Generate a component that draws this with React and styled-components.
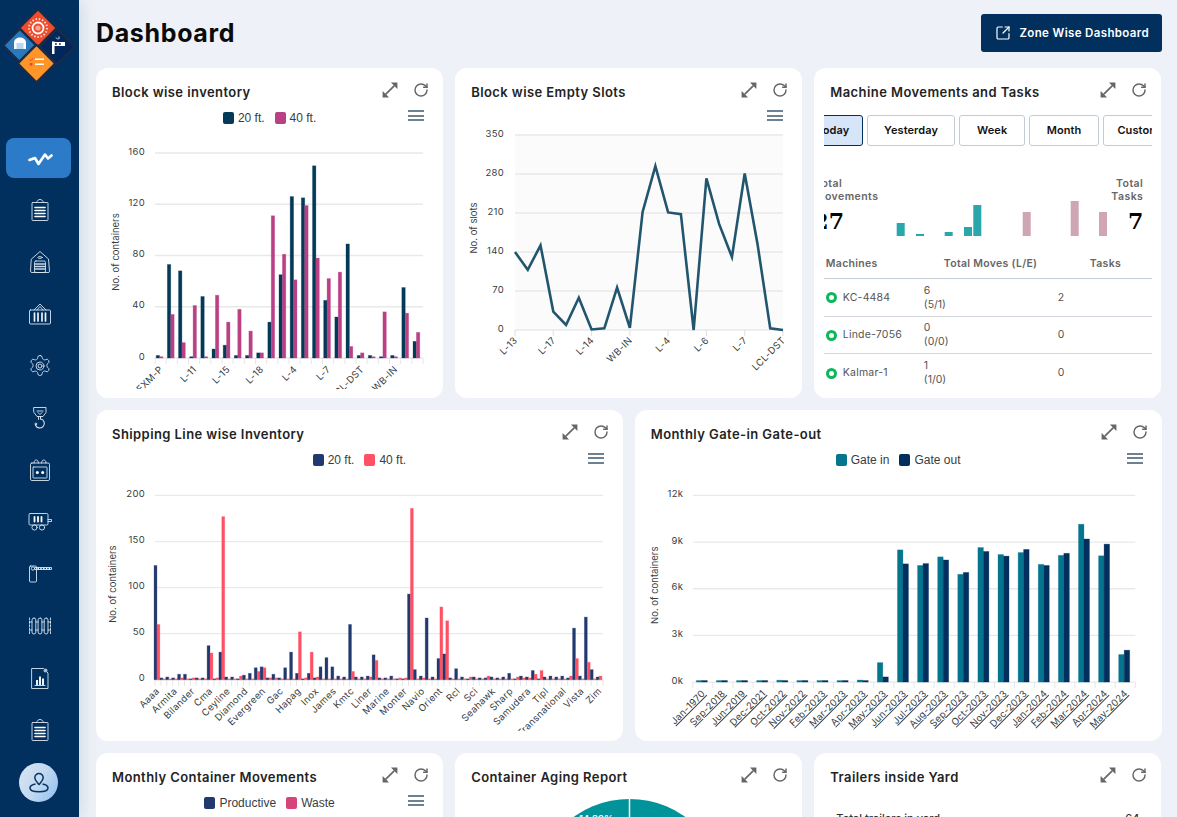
import React from "react";
import styled, { createGlobalStyle } from "styled-components";
import { RotateCw, SquareArrowOutUpRight } from "lucide-react";

const Global = createGlobalStyle`
  html, body { margin: 0; padding: 0; height: 100%; overflow: hidden; background: #eef2f8; }
  body { font-family: Inter, "Noto Sans", sans-serif; }
  * { box-sizing: border-box; }
`;

const Page = styled.div`
  display: flex;
  width: 1177px;
  height: 817px;
  overflow: hidden;
  background: #eef2f8;
`;
const Sidebar = styled.aside`
  flex: 0 0 79px;
  height: 817px;
  background: #012f5e;
  display: flex;
  flex-direction: column;
  align-items: flex-start;
  box-shadow: 2px 0 16px rgba(1, 47, 94, 0.14);
  z-index: 1;
`;
const LogoWrap = styled.div`
  height: 138px;
  width: 100%;
  flex: none;
`;
const NavList = styled.nav`
  display: flex;
  flex-direction: column;
  gap: 12px;
  padding-left: 6px;
`;
const NavItem = styled.div`
  width: 65px;
  height: 40px;
  padding-left: 3px;
  display: flex;
  align-items: center;
  justify-content: center;
  border-radius: 8px;
  background: ${(p) => (p.$active ? "#2c7bc8" : "transparent")};
  color: #d9e4f0;
`;
const Avatar = styled.div`
  width: 39px;
  height: 39px;
  margin: 13px 0 0 19px;
  border-radius: 50%;
  background: linear-gradient(120deg, #d8e5f1 0%, #c2d9f0 50%, #8fbdf0 100%);
  display: flex;
  align-items: center;
  justify-content: center;
  color: #07335f;
`;
const Main = styled.main`
  flex: 1;
  min-width: 0;
  padding: 0 15.5px 0 17px;
`;
const TopBar = styled.header`
  height: 67.75px;
  display: flex;
  align-items: flex-start;
  justify-content: space-between;
`;
const PageTitle = styled.h1`
  margin: 16px 0 0;
  font-size: 25px;
  line-height: 34px;
  font-weight: 700;
  color: #0b0b0b;
  letter-spacing: 0.65px;
`;
const ZoneButton = styled.button`
  margin-top: 14px;
  width: 181px;
  height: 38px;
  border: 0;
  border-radius: 3px;
  background: #012f5e;
  color: #fff;
  display: flex;
  align-items: center;
  gap: 9px;
  padding: 0 0 0 14px;
  font: 600 11.5px Inter, sans-serif;
  letter-spacing: 0.36px;
  white-space: nowrap;
`;
const Rows = styled.div`
  display: flex;
  flex-direction: column;
  gap: 12px;
`;
const Row = styled.div`
  display: grid;
  grid-template-columns: repeat(${(p) => p.$cols}, 1fr);
  gap: 12px;
`;
const Card = styled.section`
  height: 330.5px;
  background: #fff;
  border-radius: 12px;
  display: flex;
  flex-direction: column;
  overflow: hidden;
`;
const CardHead = styled.div`
  flex: none;
  height: 48px;
  margin-bottom: -8px;
  padding: 0 14px 0 16px;
  display: flex;
  align-items: center;
  justify-content: space-between;
`;
const CardTitle = styled.h2`
  margin: 0;
  font-size: 13px;
  font-weight: 600;
  color: #232323;
  letter-spacing: 0.42px;
  white-space: nowrap;
`;
const HeadTools = styled.div`
  display: flex;
  align-items: center;
  gap: 15px;
  color: #666;
  margin-top: -4px;
`;
const LegendRow = styled.div`
  flex: none;
  height: 20px;
  padding: 0 19px;
  display: grid;
  grid-template-columns: 1fr auto 1fr;
  align-items: center;
`;
const Legend = styled.div`
  grid-column: 2;
  display: flex;
  gap: 10px;
`;
const LegendItem = styled.span`
  display: inline-flex;
  align-items: center;
  gap: 4px;
  font: 12px "Liberation Sans", Arial, sans-serif;
  color: #373d3f;
`;
const Swatch = styled.i`
  width: 11px;
  height: 12px;
  border-radius: 2px;
  background: ${(p) => p.$c};
`;
const MenuIcon = styled.span`
  grid-column: 3;
  justify-self: end;
  width: 16px;
  margin-top: -4px;
  display: flex;
  flex-direction: column;
  gap: 2.5px;
  & > i {
    display: block;
    height: 2px;
    background: #6e8192;
  }
`;
const ChartSvg = styled.svg`
  display: block;
  flex: none;
  & text {
    font-family: Inter, "Noto Sans", sans-serif;
    font-size: 9.5px;
    letter-spacing: 0.3px;
    fill: #373d3f;
  }
  & text.axis-title {
    letter-spacing: 0;
  }
`;
const TabStrip = styled.div`
  flex: none;
  margin: 7px 9.5px 0 9.5px;
  display: flex;
  gap: 4.5px;
  overflow: hidden;
`;
const Tab = styled.button`
  flex: none;
  width: ${(p) => p.$w}px;
  height: 31px;
  margin-left: ${(p) => p.$ml || 0}px;
  background: ${(p) => (p.$active ? "#d6e6f8" : "#fff")};
  border: 1px solid ${(p) => (p.$active ? "#012f5e" : "#c3ccd6")};
  border-radius: 3px;
  font: 600 11px Inter, sans-serif;
  color: #111;
  letter-spacing: 0.1px;
  padding: 0;
`;
const Stats = styled.div`
  flex: none;
  height: 68px;
  margin: 29px 9.5px 0 9.5px;
  padding-right: 11px;
  display: flex;
  overflow: hidden;
`;
const StatBlock = styled.div`
  flex: none;
  width: ${(p) => (p.$w ? `${p.$w}px` : "auto")};
  display: flex;
  flex-direction: column;
  align-items: ${(p) => (p.$right ? "flex-end" : "flex-start")};
  margin-left: ${(p) => (p.$right ? "auto" : `${p.$ml || 0}px`)};
  text-align: ${(p) => (p.$right ? "right" : "left")};
`;
const StatLabel = styled.div`
  font-size: 10.5px;
  line-height: 13px;
  font-weight: 600;
  color: #666;
  padding-top: 2px;
  letter-spacing: 0.45px;
  white-space: nowrap;
`;
const StatValue = styled.div`
  font: 700 22px/28px "DejaVu Serif", serif;
  color: #050505;
  margin-top: 4px;
  margin-left: ${(p) => p.$ml || 0}px;
`;
const TableHead = styled.div`
  flex: none;
  margin: 13px 9.5px 0 9.5px;
  height: 23.5px;
  padding: 0 0 6px 2px;
  display: grid;
  grid-template-columns: 118px 146px 1fr;
  border-bottom: 1px solid #c6cdd6;
  font-size: 10.5px;
  font-weight: 600;
  line-height: 16px;
  color: #666;
  letter-spacing: 0.3px;
`;
const TableRow = styled.div`
  flex: none;
  margin: 0 9.5px 0 9.5px;
  height: 37.5px;
  padding-left: 2px;
  display: grid;
  grid-template-columns: 98px 134px 1fr;
  align-items: center;
  border-bottom: ${(p) => (p.$last ? "0" : "1px solid #d3d8de")};
  font-size: 10.5px;
  line-height: 14px;
  color: #555;
`;
const MachineName = styled.div`
  display: flex;
  align-items: center;
  gap: 6px;
  letter-spacing: 0.2px;
`;
const Dot = styled.i`
  width: 11px;
  height: 11px;
  border-radius: 50%;
  border: 3.5px solid #0cb85c;
  background: #fff;
`;
const PieWrap = styled.div`
  flex: none;
`;
const TrailerList = styled.div`
  padding: 18px 22px 0;
  display: flex;
  justify-content: space-between;
  font-size: 11px;
  font-weight: 500;
  color: #333;
`;

/* ---------- header icons ---------- */
const ExpandIcon = () => (
  <svg width="16" height="16" viewBox="0 0 16 16" fill="#666" stroke="none">
    <path d="M3.2 11.6 11.6 3.2 12.8 4.4 4.4 12.8Z" />
    <path d="M9 0.6H15.4V7L13.1 4.7 11.3 2.9Z" />
    <path d="M0.6 9V15.4H7L4.7 13.1 2.9 11.3Z" />
  </svg>
);
const Tools = () => (
  <HeadTools>
    <ExpandIcon />
    <RotateCw size={16} strokeWidth={2.2} />
  </HeadTools>
);
const Menu = () => (
  <MenuIcon>
    <i />
    <i />
    <i />
  </MenuIcon>
);

/* ---------- logo ---------- */
const Diamond = ({ cx, cy, r, fill }) => (
  <rect
    x={cx - r * 0.707}
    y={cy - r * 0.707}
    width={r * 1.414}
    height={r * 1.414}
    rx="2"
    fill={fill}
    stroke="#162c4d"
    strokeWidth="2.5"
    transform={`rotate(45 ${cx} ${cy})`}
  />
);
const Logo = () => (
  <svg width="79" height="88" viewBox="0 0 79 88">
    <Diamond cx={57} cy={46.5} r={18} fill="#03275a" />
    <Diamond cx={20} cy={45.5} r={17} fill="#2b79bd" />
    <Diamond cx={38} cy={28} r={19} fill="#ef4c2b" />
    <Diamond cx={36.5} cy={63.5} r={19} fill="#ff9429" />
    <circle cx="38" cy="28" r="5.5" fill="none" stroke="#fff" strokeWidth="1.8" />
    <circle cx="38" cy="28" r="2.6" fill="#f7a59a" />
    <circle cx="38" cy="28" r="9" fill="none" stroke="#ffd9d0" strokeWidth="2" strokeDasharray="1.5 1.8" />
    <path d="M14 49V42.5C14 39.5 17 37.5 20 37.5S26 39.5 26 42.5V49Z" fill="#fff" />
    <path d="M16.5 49V43H23.5V49Z" fill="#bcd6ec" />
    <path d="M52 54V41.5H54.5V54Z M52 42H65V46H52Z" fill="#fff" />
    <path d="M55 43.2H56.8V44.8H55ZM59 43.2H60.8V44.8H59Z" fill="#03275a" />
    <path d="M56 37.5L58 39.5M59 36.5V39" stroke="#dfe6f0" strokeWidth="1" fill="none" />
    <path d="M35 59.2H44M35 64.2H44" stroke="#fff" strokeWidth="1.6" />
    <path d="M29.5 59.3L31 60.6L33 58" stroke="#e34a2a" strokeWidth="1" fill="none" />
    <rect x="29.8" y="63" width="2.6" height="2.6" fill="#e34a2a" />
  </svg>
);

/* ---------- sidebar icons ---------- */
const Ico = ({ children }) => (
  <svg width="24" height="24" viewBox="0 0 24 24" fill="none" stroke="currentColor" strokeWidth="0.9" strokeLinejoin="round" strokeLinecap="round">
    {children}
  </svg>
);
const ClipboardIco = () => (
  <Ico>
    <rect x="4" y="4.5" width="16" height="18" rx="0.6" />
    <path d="M8.5 4.5C9 2.5 10.5 1.5 12 1.5S15 2.5 15.5 4.5" />
    <path d="M7 9.5H17M7 12.5H17M7 15.5H17M7 18.5H17" strokeWidth="1.6" stroke="#fff" />
  </Ico>
);
const icons = [
  <ClipboardIco key="a" />,
  <Ico key="b">
    <path d="M3.5 9 12 1.5 20.5 9 21.5 21.5Q21.5 22.5 20 22.5H4Q2.5 22.5 2.5 21.5Z" />
    <ellipse cx="12" cy="7.5" rx="2.2" ry="0.9" />
    <rect x="6.5" y="11" width="11" height="11.5" rx="1.5" />
    <path d="M7.5 14H16.5M7.5 16.5H16.5M7.5 19H16.5" strokeWidth="1.5" stroke="#c9d6e4" />
  </Ico>,
  <Ico key="c">
    <rect x="1.5" y="8" width="21" height="14" rx="1" />
    <path d="M6.5 11V19M10 11V19M14 11V19M17.5 11V19" strokeWidth="1.7" stroke="#eef3f8" />
    <path d="M6 8 12 2 18 8M9 8 12 4.5 15 8" />
  </Ico>,
  <Ico key="d">
    <path d="M12.2 1.5h-.44a2 2 0 0 0-2 2v.18a2 2 0 0 1-1 1.73l-.43.25a2 2 0 0 1-2 0l-.15-.08a2 2 0 0 0-2.73.73l-.22.38a2 2 0 0 0 .73 2.73l.15.1a2 2 0 0 1 1 1.72v.51a2 2 0 0 1-1 1.74l-.15.09a2 2 0 0 0-.73 2.73l.22.38a2 2 0 0 0 2.73.73l.15-.08a2 2 0 0 1 2 0l.43.25a2 2 0 0 1 1 1.73v.18a2 2 0 0 0 2 2h.44a2 2 0 0 0 2-2v-.18a2 2 0 0 1 1-1.73l.43-.25a2 2 0 0 1 2 0l.15.08a2 2 0 0 0 2.73-.73l.22-.39a2 2 0 0 0-.73-2.73l-.15-.08a2 2 0 0 1-1-1.74v-.5a2 2 0 0 1 1-1.74l.15-.09a2 2 0 0 0 .73-2.73l-.22-.38a2 2 0 0 0-2.73-.73l-.15.08a2 2 0 0 1-2 0l-.43-.25a2 2 0 0 1-1-1.73V3.5a2 2 0 0 0-2-2z" />
    <circle cx="12" cy="12" r="4" />
    <circle cx="12" cy="12" r="2" />
  </Ico>,
  <Ico key="e">
    <path d="M6 1.5H18V6.5L15 10.5H9L6 6.5Z" />
    <path d="M9 5H15M10 6.5 12 8.5 14 6.5" />
    <path d="M12.5 10.5V13C16.5 13.5 17 18 15.5 20C13.5 23 8 22.5 7.5 18.5" strokeWidth="1.1" />
    <path d="M10.5 10.5V13.5" />
    <circle cx="7.8" cy="18" r="0.9" />
  </Ico>,
  <Ico key="f">
    <rect x="2.5" y="5" width="19" height="17.5" rx="1.4" />
    <rect x="5" y="9" width="14" height="11" rx="0.5" />
    <path d="M6 5C6 2.8 7.2 2 8.2 2S10.4 2.8 10.4 5M13.6 5C13.6 2.8 14.8 2 15.8 2S18 2.8 18 5" />
    <circle cx="9.3" cy="14.5" r="1.5" fill="#fff" stroke="none" />
    <circle cx="14.7" cy="14.5" r="1.5" fill="#fff" stroke="none" />
  </Ico>,
  <Ico key="g">
    <rect x="1" y="3.5" width="19" height="11.5" rx="1.2" />
    <path d="M6.5 7V11.5M10 7V11.5M13.5 7V11.5" strokeWidth="1.8" stroke="#fff" />
    <path d="M20 9.5H23.5V11.5H20" />
    <circle cx="6.5" cy="17.5" r="2.6" />
    <circle cx="14" cy="17.5" r="2.6" />
  </Ico>,
  <Ico key="h">
    <rect x="1.5" y="4" width="7" height="16" rx="1" />
    <circle cx="5" cy="6.5" r="1.7" />
    <path d="M7 5.5H23.5V7.5H7" />
    <path d="M9.5 6.5H22" strokeWidth="1.5" strokeDasharray="1.4 1.4" strokeLinecap="butt" stroke="#fff" />
  </Ico>,
  <Ico key="i">
    <rect x="4" y="4" width="3.8" height="16" rx="1.9" />
    <rect x="10.1" y="4" width="3.8" height="16" rx="1.9" />
    <rect x="16.2" y="4" width="3.8" height="16" rx="1.9" />
    <path d="M1.5 4V20M22.5 4V20" strokeDasharray="2 1.4" />
    <path d="M1.5 8H4M1.5 16H4M7.8 8H10.1M7.8 16H10.1M13.9 8H16.2M13.9 16H16.2M20 8H22.5M20 16H22.5" />
  </Ico>,
  <Ico key="j">
    <path d="M4 2.5H15.5L20 7V22.5H4Z" />
    <circle cx="17.5" cy="4.5" r="2" fill="#aab9c9" stroke="none" />
    <path d="M8 19V14H10V19ZM11 19V10.5H13V19ZM14 19V12.5H16V19Z" fill="#eef3f8" stroke="none" />
    <path d="M7 19.5H17" />
  </Ico>,
  <ClipboardIco key="k" />,
];

/* ---------- charts ---------- */
function Axes({ plot, ticks, title, titleX, tickX, titleDy = -3.5 }) {
  const { x0, x1, y0, yTop, max } = plot;
  const sy = (v) => y0 - ((y0 - yTop) * v) / max;
  const ty = (y0 + yTop) / 2 + titleDy;
  return (
    <>
      {ticks.map((t) => (
        <g key={t.v}>
          <line x1={x0} x2={x1} y1={sy(t.v)} y2={sy(t.v)} stroke="#e9e9e9" strokeWidth="1.3" />
          <text x={tickX} y={sy(t.v) + 1.6} textAnchor="end">
            {t.l}
          </text>
        </g>
      ))}
      <text className="axis-title" x={titleX} y={ty} textAnchor="middle" transform={`rotate(-90 ${titleX} ${ty})`}>
        {title}
      </text>
    </>
  );
}

function BarChart({ id, box, plot, ticks, title, titleX, tickX, data, colors, barW, labels, labelStep, clipY, underline, labelDx = 3, labelDy = 12, shift = 1 }) {
  const { x0, x1, y0, yTop, max } = plot;
  const sy = (v) => y0 - ((y0 - yTop) * v) / max;
  const slot = (x1 - x0) / data.length;
  return (
    <ChartSvg width={box.w} height={box.h} viewBox={`${box.x} ${box.y} ${box.w} ${box.h}`}>
      <defs>
        <clipPath id={id}>
          <rect x={box.x} y={box.y} width={box.w} height={(clipY || box.y + box.h) - box.y} />
        </clipPath>
      </defs>
      <Axes plot={plot} ticks={ticks} title={title} titleX={titleX} tickX={tickX} />
      {data.map((_, i) => (
        <line key={i} x1={x0 + i * slot} x2={x0 + i * slot} y1={y0} y2={y0 + 6} stroke="#e6e6e6" />
      ))}
      <line x1={x1} x2={x1} y1={y0} y2={y0 + 6} stroke="#e6e6e6" />
      {data.map((d, i) => {
        const c = x0 + (i + 0.5) * slot - shift;
        return (
          <g key={i}>
            {d.map((v, k) => (
              <rect
                key={k}
                x={c + (k - 1) * barW}
                y={sy(v)}
                width={barW}
                height={y0 - sy(v)}
                fill={colors[k]}
                stroke={colors[k]}
                strokeOpacity="0.35"
                strokeWidth="0.8"
              />
            ))}
          </g>
        );
      })}
      <g clipPath={`url(#${id})`}>
        {labels.map((l, i) => {
          const x = x0 + (i * labelStep + 0.5) * slot + labelDx;
          const y = y0 + labelDy;
          return (
            <text
              key={l}
              x={x}
              y={y}
              textAnchor="end"
              transform={`rotate(-45 ${x} ${y})`}
              style={{ textDecoration: underline ? "underline" : "none" }}
            >
              {l}
            </text>
          );
        })}
      </g>
    </ChartSvg>
  );
}

function LineChart() {
  const box = { x: 455, y: 128, w: 347.17, h: 270.5 };
  const plot = { x0: 515, x1: 783, y0: 330, yTop: 135, max: 350 };
  const vals = [140, 108, 152, 33, 9, 58, 1, 3, 76, 4, 212, 294, 211, 208, 0, 272, 190, 131, 281, 155, 3, 0];
  const step = (plot.x1 - plot.x0) / 21;
  const sy = (v) => plot.y0 - ((plot.y0 - plot.yTop) * v) / plot.max;
  const pts = vals.map((v, i) => `${plot.x0 + i * step},${sy(v)}`).join(" ");
  const labels = ["L-13", "L-17", "L-14", "WB-IN", "L-4", "L-6", "L-7", "LCL-DST"];
  return (
    <ChartSvg width={box.w} height={box.h} viewBox={`${box.x} ${box.y} ${box.w} ${box.h}`}>
      <rect x={plot.x0} y={plot.yTop} width={plot.x1 - plot.x0} height={plot.y0 - plot.yTop} fill="#fbfbfb" />
      <Axes
        plot={plot}
        titleDy={-4.5}
        ticks={[0, 70, 140, 210, 280, 350].map((v) => ({ v, l: v }))}
        title="No. of slots"
        titleX={477}
        tickX={504}
      />
      {labels.map((l, i) => {
        const xt = plot.x0 + i * 3 * step;
        return (
          <g key={l}>
            <line x1={xt} x2={xt} y1={plot.y0} y2={plot.y0 + 6} stroke="#e0e0e0" />
            <text x={xt + 3} y={plot.y0 + 11} textAnchor="end" transform={`rotate(-45 ${xt + 3} ${plot.y0 + 11})`}>
              {l}
            </text>
          </g>
        );
      })}
      <polyline points={pts} fill="none" stroke="#22566f" strokeWidth="2.6" strokeLinejoin="miter" />
    </ChartSvg>
  );
}

const inventory = [[2,1],[73,34],[68,12],[1,41],[48,1],[7,49],[10,28],[2,38],[2,21],[4,4],[28,111],[65,81],[126,61],[125,119],[150,78],[45,62],[32,67],[89,9],[2,4],[2,1],[1,36],[2,1],[55,35],[13,20]];
const shipping = [[124,60],[2,1],[3,1],[2,1],[6,2],[6,1],[1,2],[2,1],[2,1],[37,29],[1,2],[30,177],[3,1],[3,1],[1,4],[5,1],[7,1],[13,9],[14,13],[2,2],[6,2],[2,1],[13,1],[30,1],[7,52],[1,2],[7,30],[2,3],[14,1],[24,1],[14,1],[4,1],[3,1],[60,9],[3,1],[3,1],[4,3],[27,21],[2,1],[2,1],[4,1],[1,2],[1,2],[93,186],[11,1],[4,2],[67,1],[3,1],[23,79],[28,64],[2,1],[12,1],[3,1],[1,3],[3,1],[2,1],[2,4],[3,1],[2,1],[3,1],[7,1],[1,3],[4,2],[3,2],[10,6],[1,10],[3,1],[4,1],[3,1],[4,1],[2,4],[56,23],[4,1],[68,19],[11,1],[3,4]];
const gate = [[0.1,0.1],[0.1,0.1],[0.1,0.1],[0.1,0.1],[0.12,0.1],[0.1,0.1],[0.1,0.1],[0.1,0.1],[0.13,0.1],[1.25,0.33],[8.5,7.6],[7.5,7.62],[8.05,7.85],[6.93,7.05],[8.65,8.4],[8.2,8.1],[8.33,8.53],[7.57,7.5],[8.15,8.28],[10.15,9.2],[8.12,8.87],[1.77,2.05]];
const gateLabels = ["Jan-1970","Sep-2018","Jun-2019","Dec-2021","Oct-2022","Nov-2022","Feb-2023","Mar-2023","Apr-2023","May-2023","Jun-2023","Jul-2023","Aug-2023","Sep-2023","Oct-2023","Nov-2023","Dec-2023","Jan-2024","Feb-2024","Mar-2024","Apr-2024","May-2024"];
const shippingLabels = ["Aaaa","Armita","Bilander","Cma","Ceyline","Diamond","Evergreen","Gac","Hapag","Inox","James","Kmtc","Liner","Marine","Monter","Navio","Orient","Rcl","Sci","Seahawk","Sharp","Samudera","Tipl","Transnational","Vista","Zim"];

const Head = ({ title }) => (
  <CardHead>
    <CardTitle>{title}</CardTitle>
    <Tools />
  </CardHead>
);
const LegendBar = ({ items, menu = true }) => (
  <LegendRow>
    {items && (
      <Legend>
        {items.map(([l, c]) => (
          <LegendItem key={l}>
            <Swatch $c={c} />
            {l}
          </LegendItem>
        ))}
      </Legend>
    )}
    {menu && <Menu />}
  </LegendRow>
);

const MiniBars = () => {
  const bars = [
    [897.7, 13, "#2aa6ad"], [917, 2, "#2aa6ad"], [945.7, 4, "#2aa6ad"], [965, 9, "#2aa6ad"], [974.3, 31, "#2aa6ad"],
    [1023.7, 24, "#cfa6b3"], [1071.7, 35, "#cfa6b3"], [1100, 24, "#cfa6b3"],
  ];
  return (
    <svg width="232" height="61" viewBox="880 175 232 61" style={{ flex: "none" }}>
      {bars.map(([x, h, c]) => (
        <rect key={x} x={x} y={236 - h} width="8" height={h} fill={c} />
      ))}
    </svg>
  );
};

const machines = [
  ["KC-4484", "6", "(5/1)", "2"],
  ["Linde-7056", "0", "(0/0)", "0"],
  ["Kalmar-1", "1", "(1/0)", "0"],
];

export default function App() {
  return (
    <Page>
      <Global />
      <Sidebar>
        <LogoWrap>
          <Logo />
        </LogoWrap>
        <NavList>
          <NavItem $active>
            <svg width="25" height="15" viewBox="0 0 25 15" fill="none" stroke="#fff" strokeWidth="2.6" strokeLinejoin="round" strokeLinecap="round">
              <path d="M1.5 9 7 7 10.5 13 17 3.5 20 7.5 23.5 4.5" />
            </svg>
          </NavItem>
          {icons.map((ic, i) => (
            <NavItem key={i}>{ic}</NavItem>
          ))}
        </NavList>
        <Avatar>
          <svg width="24" height="24" viewBox="0 0 24 24" fill="none" stroke="currentColor" strokeWidth="1.5" strokeLinejoin="round">
            <path d="M12 2.5A4.2 4.2 0 0 1 16.2 6.7C16.2 9.2 14 11 12 13.5C10 11 7.8 9.2 7.8 6.7A4.2 4.2 0 0 1 12 2.5Z" />
            <path d="M8.5 13C5 13.6 3 15 3 17C3 19.3 7 20.8 12 20.8S21 19.3 21 17C21 15 19 13.6 15.5 13" />
          </svg>
        </Avatar>
      </Sidebar>
      <Main>
        <TopBar>
          <PageTitle>Dashboard</PageTitle>
          <ZoneButton>
            <SquareArrowOutUpRight size={16} strokeWidth={1.8} />
            Zone Wise Dashboard
          </ZoneButton>
        </TopBar>
        <Rows>
          <Row $cols={3}>
            <Card>
              <Head title="Block wise inventory" />
              <LegendBar items={[["20 ft.", "#033a58"], ["40 ft.", "#b94084"]]} />
              <BarChart
                id="c1"
                box={{ x: 96, y: 128, w: 347.17, h: 270.5 }}
                plot={{ x0: 155, x1: 423, y0: 358, yTop: 153, max: 160 }}
                ticks={[0, 40, 80, 120, 160].map((v) => ({ v, l: v }))}
                title="No. of containers"
                titleX={119}
                tickX={145}
                data={inventory}
                colors={["#033a58", "#b94084"]}
                barW={3.4}
                labels={["EXM-P", "L-11", "L-15", "L-18", "L-4", "L-7", "LCL-DST", "WB-IN"]}
                labelStep={3}
                clipY={389}
              />
            </Card>
            <Card>
              <Head title="Block wise Empty Slots" />
              <LegendBar />
              <LineChart />
            </Card>
            <Card>
              <Head title="Machine Movements and Tasks" />
              <TabStrip>
                <Tab $active $w={60} $ml={-21}>Today</Tab>
                <Tab $w={87.5}>Yesterday</Tab>
                <Tab $w={65.5}>Week</Tab>
                <Tab $w={69.5}>Month</Tab>
                <Tab $w={70}>Custom</Tab>
              </TabStrip>
              <Stats>
                <StatBlock $ml={-9} $w={64.5}>
                  <StatLabel>
                    Total
                    <br />
                    Movements
                  </StatLabel>
                  <StatValue $ml={-1.5}>27</StatValue>
                </StatBlock>
                <MiniBars />
                <StatBlock $right>
                  <StatLabel>
                    Total
                    <br />
                    Tasks
                  </StatLabel>
                  <StatValue>7</StatValue>
                </StatBlock>
              </Stats>
              <TableHead>
                <span>Machines</span>
                <span>Total Moves (L/E)</span>
                <span>Tasks</span>
              </TableHead>
              {machines.map(([n, a, b, t], i) => (
                <TableRow key={n} $last={i === 2}>
                  <MachineName>
                    <Dot />
                    {n}
                  </MachineName>
                  <div>
                    {a}
                    <br />
                    {b}
                  </div>
                  <div>{t}</div>
                </TableRow>
              ))}
            </Card>
          </Row>
          <Row $cols={2}>
            <Card>
              <Head title="Shipping Line wise Inventory" />
              <LegendBar items={[["20 ft.", "#22396f"], ["40 ft.", "#ff5064"]]} />
              <BarChart
                id="c3"
                box={{ x: 96, y: 470.25, w: 526.75, h: 270.5 }}
                plot={{ x0: 155, x1: 603, y0: 680, yTop: 495.7, max: 200 }}
                ticks={[0, 50, 100, 150, 200].map((v) => ({ v, l: v }))}
                title="No. of containers"
                titleX={116}
                tickX={145}
                data={shipping}
                colors={["#22396f", "#ff5064"]}
                barW={2.9}
                labels={shippingLabels}
                labelStep={3}
                clipY={731}
                labelDx={2}
              />
            </Card>
            <Card>
              <Head title="Monthly Gate-in Gate-out" />
              <LegendBar items={[["Gate in", "#05758f"], ["Gate out", "#012f5e"]]} />
              <BarChart
                id="c4"
                box={{ x: 634.75, y: 470.25, w: 526.75, h: 270.5 }}
                plot={{ x0: 692.5, x1: 1135, y0: 682.3, yTop: 495.7, max: 12 }}
                ticks={[0, 3, 6, 9, 12].map((v) => ({ v, l: `${v}k` }))}
                title="No. of containers"
                titleX={658}
                tickX={683}
                data={gate}
                colors={["#05758f", "#012f5e"]}
                barW={5.5}
                labels={gateLabels}
                labelStep={1}
                underline
                labelDx={3}
              />
            </Card>
          </Row>
          <Row $cols={3}>
            <Card>
              <Head title="Monthly Container Movements" />
              <LegendBar items={[["Productive", "#22396f"], ["Waste", "#d6457a"]]} />
            </Card>
            <Card>
              <Head title="Container Aging Report" />
              <PieWrap>
                <svg width="347" height="100" viewBox="455 793 347 100">
                  <circle cx="629.5" cy="895" r="96" fill="#00939a" />
                  <line x1="629.5" x2="629.5" y1="795" y2="895" stroke="#fff" strokeWidth="1.5" />
                  <text x="579" y="822" fill="#fff" fontSize="9.5" fontWeight="600" fontFamily="Inter, sans-serif">14.29%</text>
                </svg>
              </PieWrap>
            </Card>
            <Card>
              <Head title="Trailers inside Yard" />
              <TrailerList>
                <span>Total trailers in yard</span>
                <span>64</span>
              </TrailerList>
            </Card>
          </Row>
        </Rows>
      </Main>
    </Page>
  );
}
